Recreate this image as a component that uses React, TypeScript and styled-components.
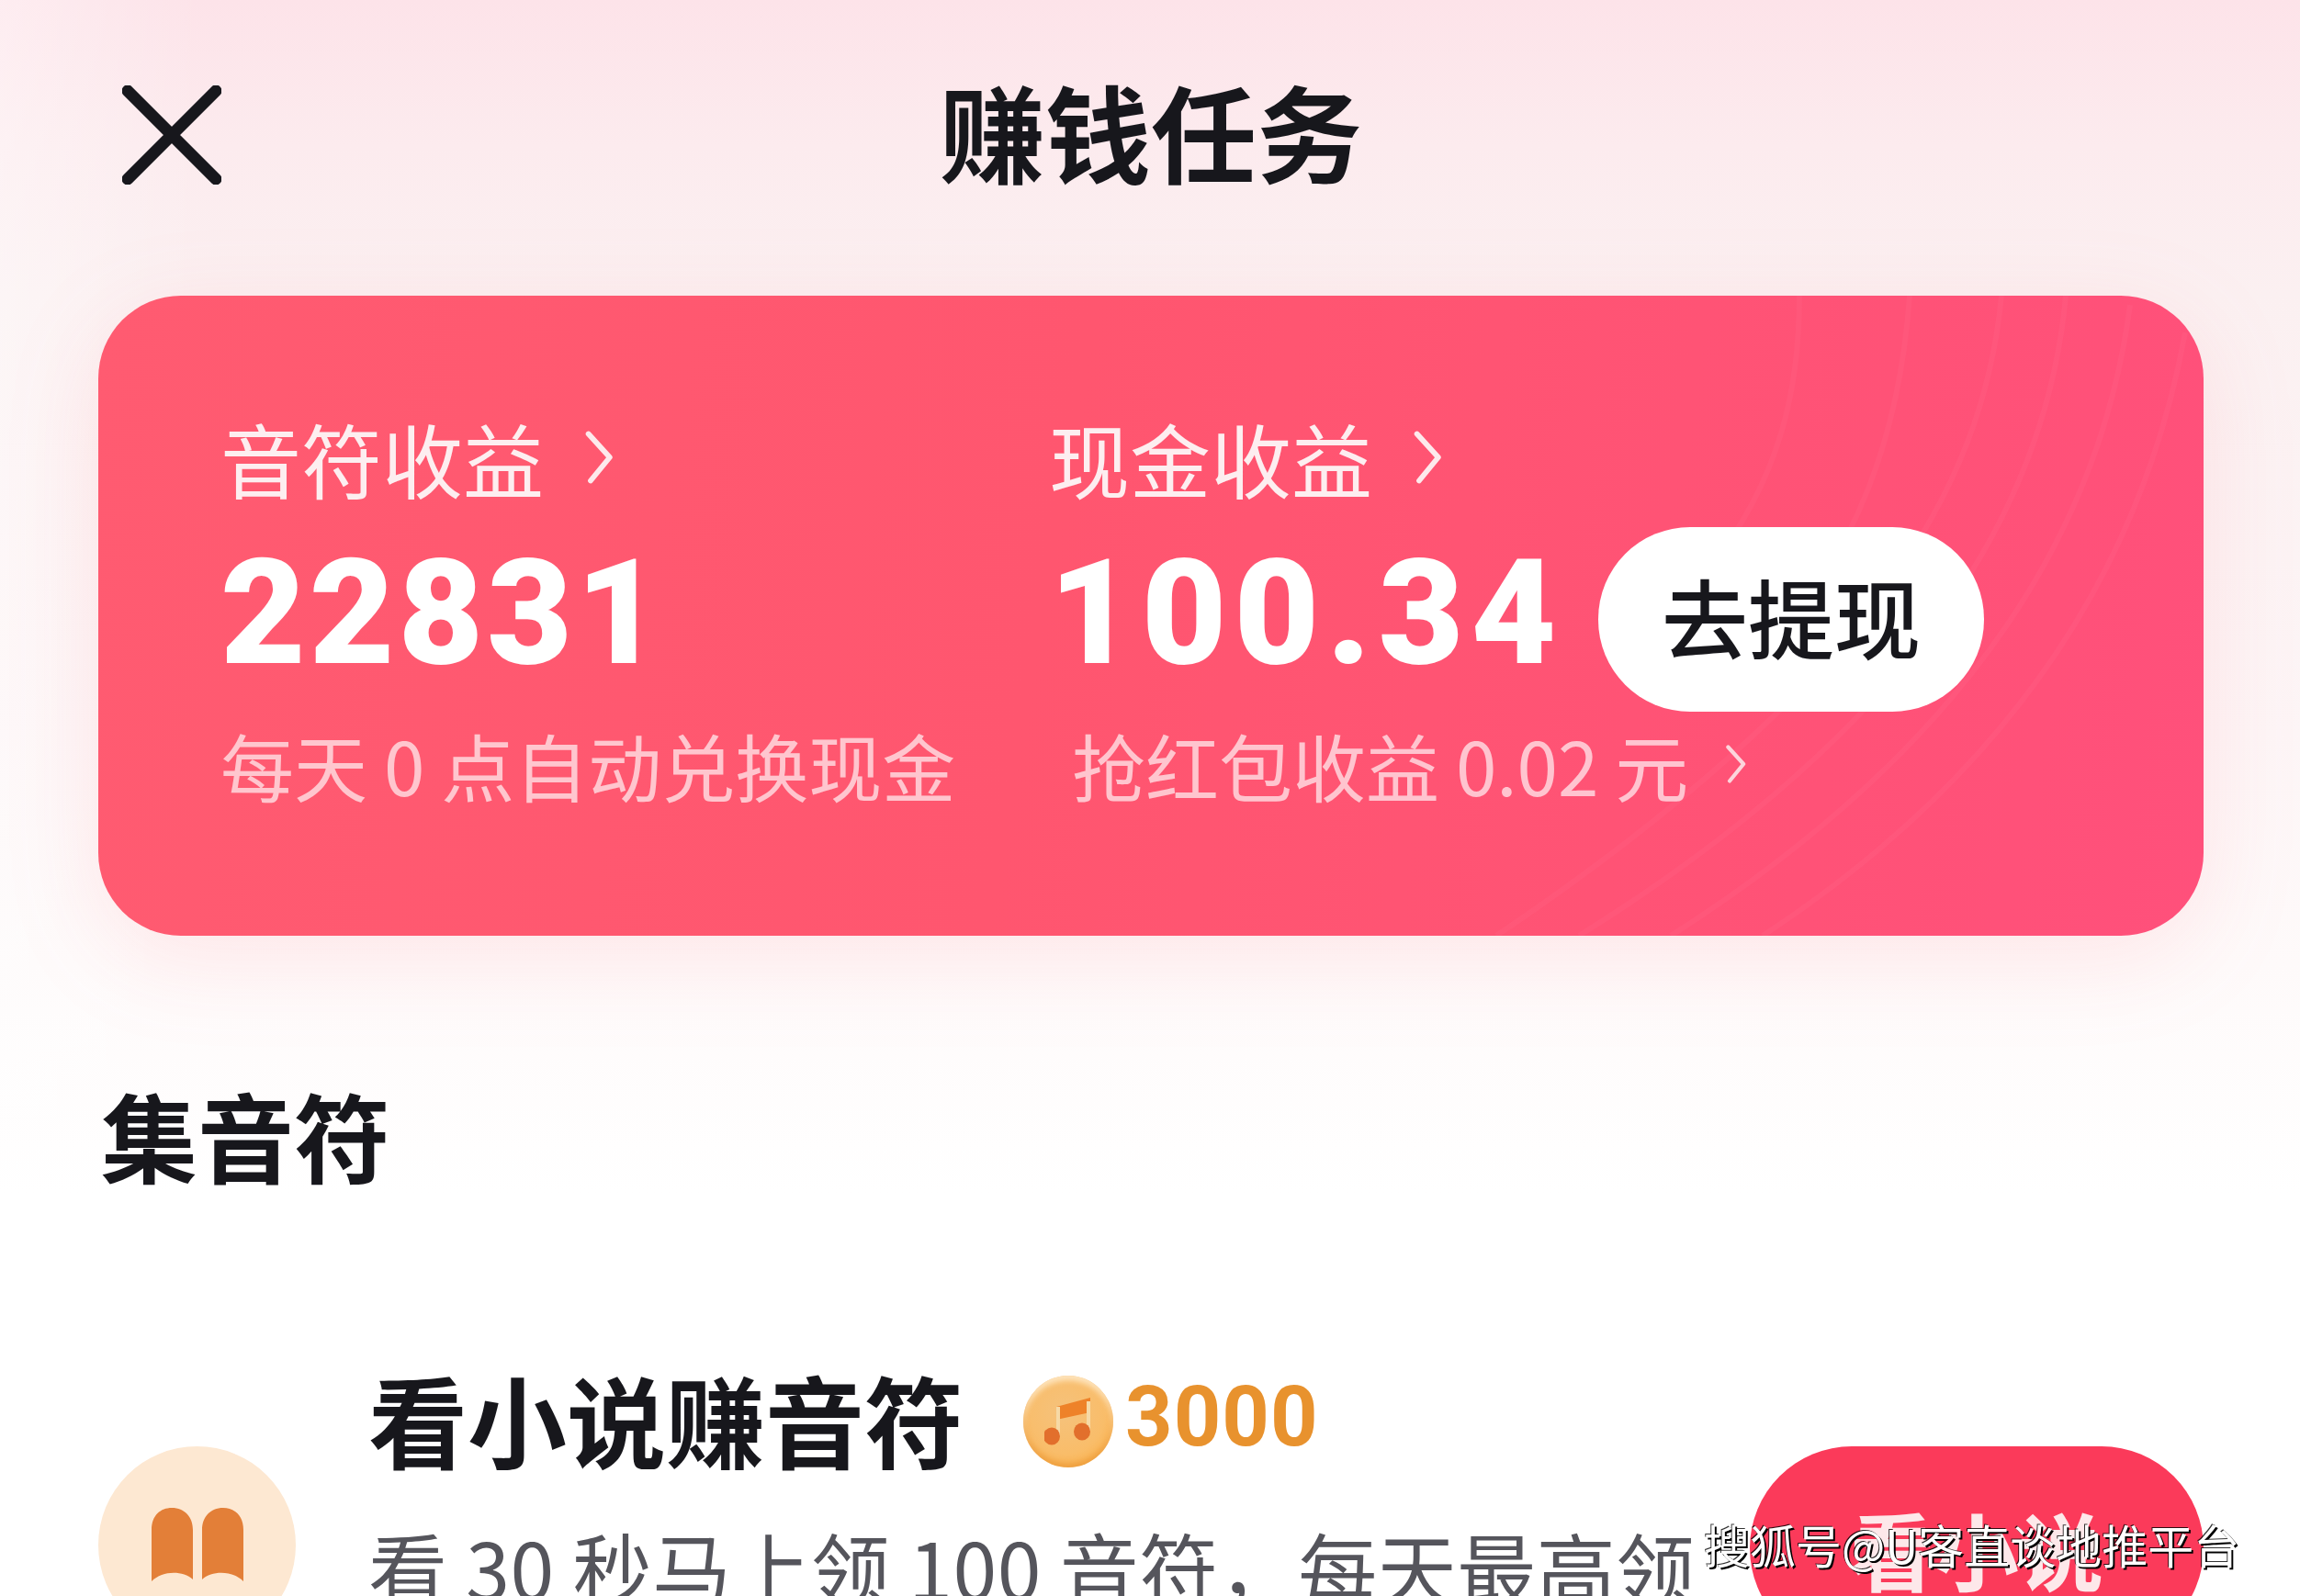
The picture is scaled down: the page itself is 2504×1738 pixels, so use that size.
import React from "react";
import styled, { createGlobalStyle } from "styled-components";

const Global = createGlobalStyle`
  html, body { margin: 0; padding: 0; height: 1738px; overflow: hidden; background: #fff; }
  * { box-sizing: border-box; }
`;
const cjk = `"Noto Sans CJK SC", "Noto Sans", sans-serif`;

const Page = styled.div`
  position: relative; width: 2504px; height: 1738px; overflow: hidden;
  font-family: ${cjk};
  background:
    linear-gradient(90deg, rgba(255,255,255,.35) 0, rgba(255,255,255,0) 220px),
    linear-gradient(180deg, #fde3e9 0, #fcebee 160px, #fbf0f1 320px, #fdf5f6 800px, #fefafa 1050px, #ffffff 1300px);
`;
const Header = styled.header`
  height: 322px; padding: 93px 0 0 133px; position: relative;
  display: flex; align-items: flex-start;
`;
const CloseIcon = styled.svg`width: 108px; height: 108px; flex: none; display: block;`;
const Title = styled.h1`
  margin: -27px 0 0 0; padding-left: 782px; font-size: 115px; line-height: 150px; font-weight: 700; color: #17171c;
`;
const Card = styled.section`
  position: relative; overflow: hidden;
  margin: 0 105px 0 107px; height: 697px; border-radius: 90px; padding: 126px 0 0 133px;
  background: linear-gradient(100deg, #ff5b71 0%, #ff566f 45%, #ff507b 100%);
`;
const CardShadow = styled.div`
  border-radius: 90px; filter: drop-shadow(0 24px 50px rgba(255,90,110,.12));
`;
const Waves = styled.svg`position: absolute; right: 0; top: 0; width: 1300px; height: 697px; pointer-events: none;`;
const Columns = styled.div`display: flex; position: relative;`;
const LeftCol = styled.div`width: 902px; flex: none;`;
const RightCol = styled.div`flex: 1;`;
const Label = styled.div`
  display: flex; align-items: center; gap: 44px; height: 100px;
  font-size: 88px; line-height: 100px; font-weight: 400; color: #fdeef0;
`;
const Chevron = styled.svg<{ $h: number }>`
  height: ${p => p.$h}px; width: ${p => p.$h * 0.56}px; display: block; flex: none;
`;
const AmountRow = styled.div`
  display: flex; align-items: center; height: 210px; margin-top: 15px;
`;
const Amount = styled.div<{ $spacing: number }>`
  font-family: "Roboto", "Liberation Sans", sans-serif; font-weight: 900; font-size: 160px; line-height: 210px;
  letter-spacing: ${p => p.$spacing}px; color: #fff;
`;
const Withdraw = styled.button`
  border: 0; margin: 12px 0 0 38px; width: 420px; height: 201px; border-radius: 100px; background: #fff; color: #17171c;
  font-family: ${cjk}; font-size: 94px; font-weight: 500; padding: 0 0 8px; line-height: 1;
`;
const Note = styled.div<{ $indent?: number }>`
  display: flex; align-items: center; gap: 40px; margin-top: 11px; padding-left: ${p => p.$indent || 0}px;
  height: 96px; font-size: 80px; line-height: 96px; color: rgba(255,255,255,.66); white-space: nowrap; font-weight: 400;
`;
const Section = styled.h2`
  margin: 150px 0 0 110px; font-size: 105px; line-height: 130px; height: 130px; font-weight: 700; color: #17171c;
`;
const Row = styled.div`
  display: grid; grid-template-columns: 215px 1fr 494px; column-gap: 82px; align-items: start;
  margin: 190px 105px 0 107px; min-height: 364px;
`;
const IconCircle = styled.div`
  width: 215px; height: 215px; margin-top: 86px; border-radius: 50%; background: #fde8d2;
  display: flex; align-items: center; justify-content: center;
`;
const Book = styled.svg`width: 100px; height: 82px; display: block;`;
const TaskText = styled.div`min-width: 0; white-space: nowrap; margin-left: -3px;`;
const TaskTitle = styled.div`
  display: flex; align-items: center; height: 110px; font-size: 108px; line-height: 110px; font-weight: 700; color: #17171c;
`;
const Coin = styled.span`
  display: flex; align-items: center; justify-content: center; flex: none;
  width: 98px; height: 100px; margin: 8px 0 0 65px; border-radius: 50%;
  background: radial-gradient(circle at 45% 40%, #f5c27c 0, #f9bd6a 55%, #fbb95c 72%, #eda23f 100%);
  box-shadow: inset 0 -5px 6px rgba(230,140,40,.55), inset 0 5px 6px rgba(255,236,205,.9);
`;
const NoteIcon = styled.svg`width: 52px; height: 52px; display: block;`;
const Reward = styled.span`
  font-family: "Roboto", "Liberation Sans", sans-serif; font-size: 90px; font-weight: 700; color: #e8922e; margin-left: 13px; letter-spacing: 1px;
`;
const TaskDesc = styled.div`
  margin-top: 52px; font-size: 86px; line-height: 110px; color: #55555c; font-weight: 400; letter-spacing: .5px;
`;
const ActionButton = styled.button`
  border: 0; height: 222px; margin-top: 86px; border-radius: 111px; background: #fb3a5a; color: #fde8ea; padding: 0;
  font-family: ${cjk}; font-size: 92px; font-weight: 700; line-height: 1;
`;
const Watermark = styled.div`
  position: absolute; left: 1855px; top: 1651px; font-size: 50px; line-height: 60px; color: #fff; white-space: nowrap; font-weight: 400;
  text-shadow: 2px 2px 0 #000, -1px -1px 0 rgba(0,0,0,.8);
`;

const Arrow = ({ h, color }: { h: number; color: string }) => (
  <Chevron $h={h} viewBox="0 0 28 50" fill="none">
    <path d="M4 3 L24 25 L6 47" stroke={color} strokeWidth="5" strokeLinecap="round" strokeLinejoin="round" />
  </Chevron>
);

export default function App() {
  return (
    <Page>
      <Global />
      <Header>
        <CloseIcon viewBox="0 0 108 108" fill="none">
          <path d="M6 6 L102 102 M102 6 L6 102" stroke="#17171c" strokeWidth="13" strokeLinecap="round" />
        </CloseIcon>
        <Title>赚钱任务</Title>
      </Header>
      <CardShadow>
        <Card>
          <Waves viewBox="0 0 1300 697" fill="none">
            <g stroke="#ff7d9a" strokeOpacity=".12" strokeWidth="6">
              <path d="M1280 40 C1240 260 1120 500 820 697" />
              <path d="M1220 10 C1190 240 1060 480 720 697" />
              <path d="M1150 0 C1130 220 1000 460 620 697" />
              <path d="M1080 0 C1060 210 940 420 530 697" />
              <path d="M980 0 C970 140 930 280 800 420" />
              <path d="M860 0 C860 100 840 200 760 300" />
            </g>
          </Waves>
          <Columns>
            <LeftCol>
              <Label>音符收益<Arrow h={58} color="#fde9ec" /></Label>
              <AmountRow><Amount $spacing={4}>22831</Amount></AmountRow>
              <Note>每天 0 点自动兑换现金</Note>
            </LeftCol>
            <RightCol>
              <Label>现金收益<Arrow h={58} color="#fde9ec" /></Label>
              <AmountRow>
                <Amount $spacing={8}>100.34</Amount>
                <Withdraw>去提现</Withdraw>
              </AmountRow>
              <Note $indent={25}>抢红包收益 0.02 元<Arrow h={42} color="#fcd5dc" /></Note>
            </RightCol>
          </Columns>
        </Card>
      </CardShadow>
      <Section>集音符</Section>
      <Row>
        <IconCircle>
          <Book viewBox="0 0 100 82">
            <path d="M0 80 L0 24 C0 8 10 0 22 0 C36 0 45 10 45 24 L45 78 C34 68 12 68 0 80 Z" fill="#e37f38" />
            <path d="M100 80 L100 24 C100 8 90 0 78 0 C64 0 55 10 55 24 L55 78 C66 68 88 68 100 80 Z" fill="#e37f38" />
          </Book>
        </IconCircle>
        <TaskText>
          <TaskTitle>
            看小说赚音符
            <Coin>
              <NoteIcon viewBox="0 0 52 52">
                <path d="M13 10 L50 0 L50 16 L13 24 Z" fill="#ee8229" />
                <path d="M13 10 L17 10 L17 42 L13 42 Z M46 4 L50 4 L50 36 L46 36 Z" fill="#f6d9a6" />
                <ellipse cx="8" cy="42" rx="9" ry="9.5" fill="#e26f2c" />
                <ellipse cx="41" cy="37" rx="9" ry="9.5" fill="#e26f2c" />
              </NoteIcon>
            </Coin>
            <Reward>3000</Reward>
          </TaskTitle>
          <TaskDesc>看 30 秒马上领 100 音符，每天最高领</TaskDesc>
        </TaskText>
        <ActionButton>看小说</ActionButton>
      </Row>
      <Watermark>搜狐号@U客直谈地推平台</Watermark>
    </Page>
  );
}
